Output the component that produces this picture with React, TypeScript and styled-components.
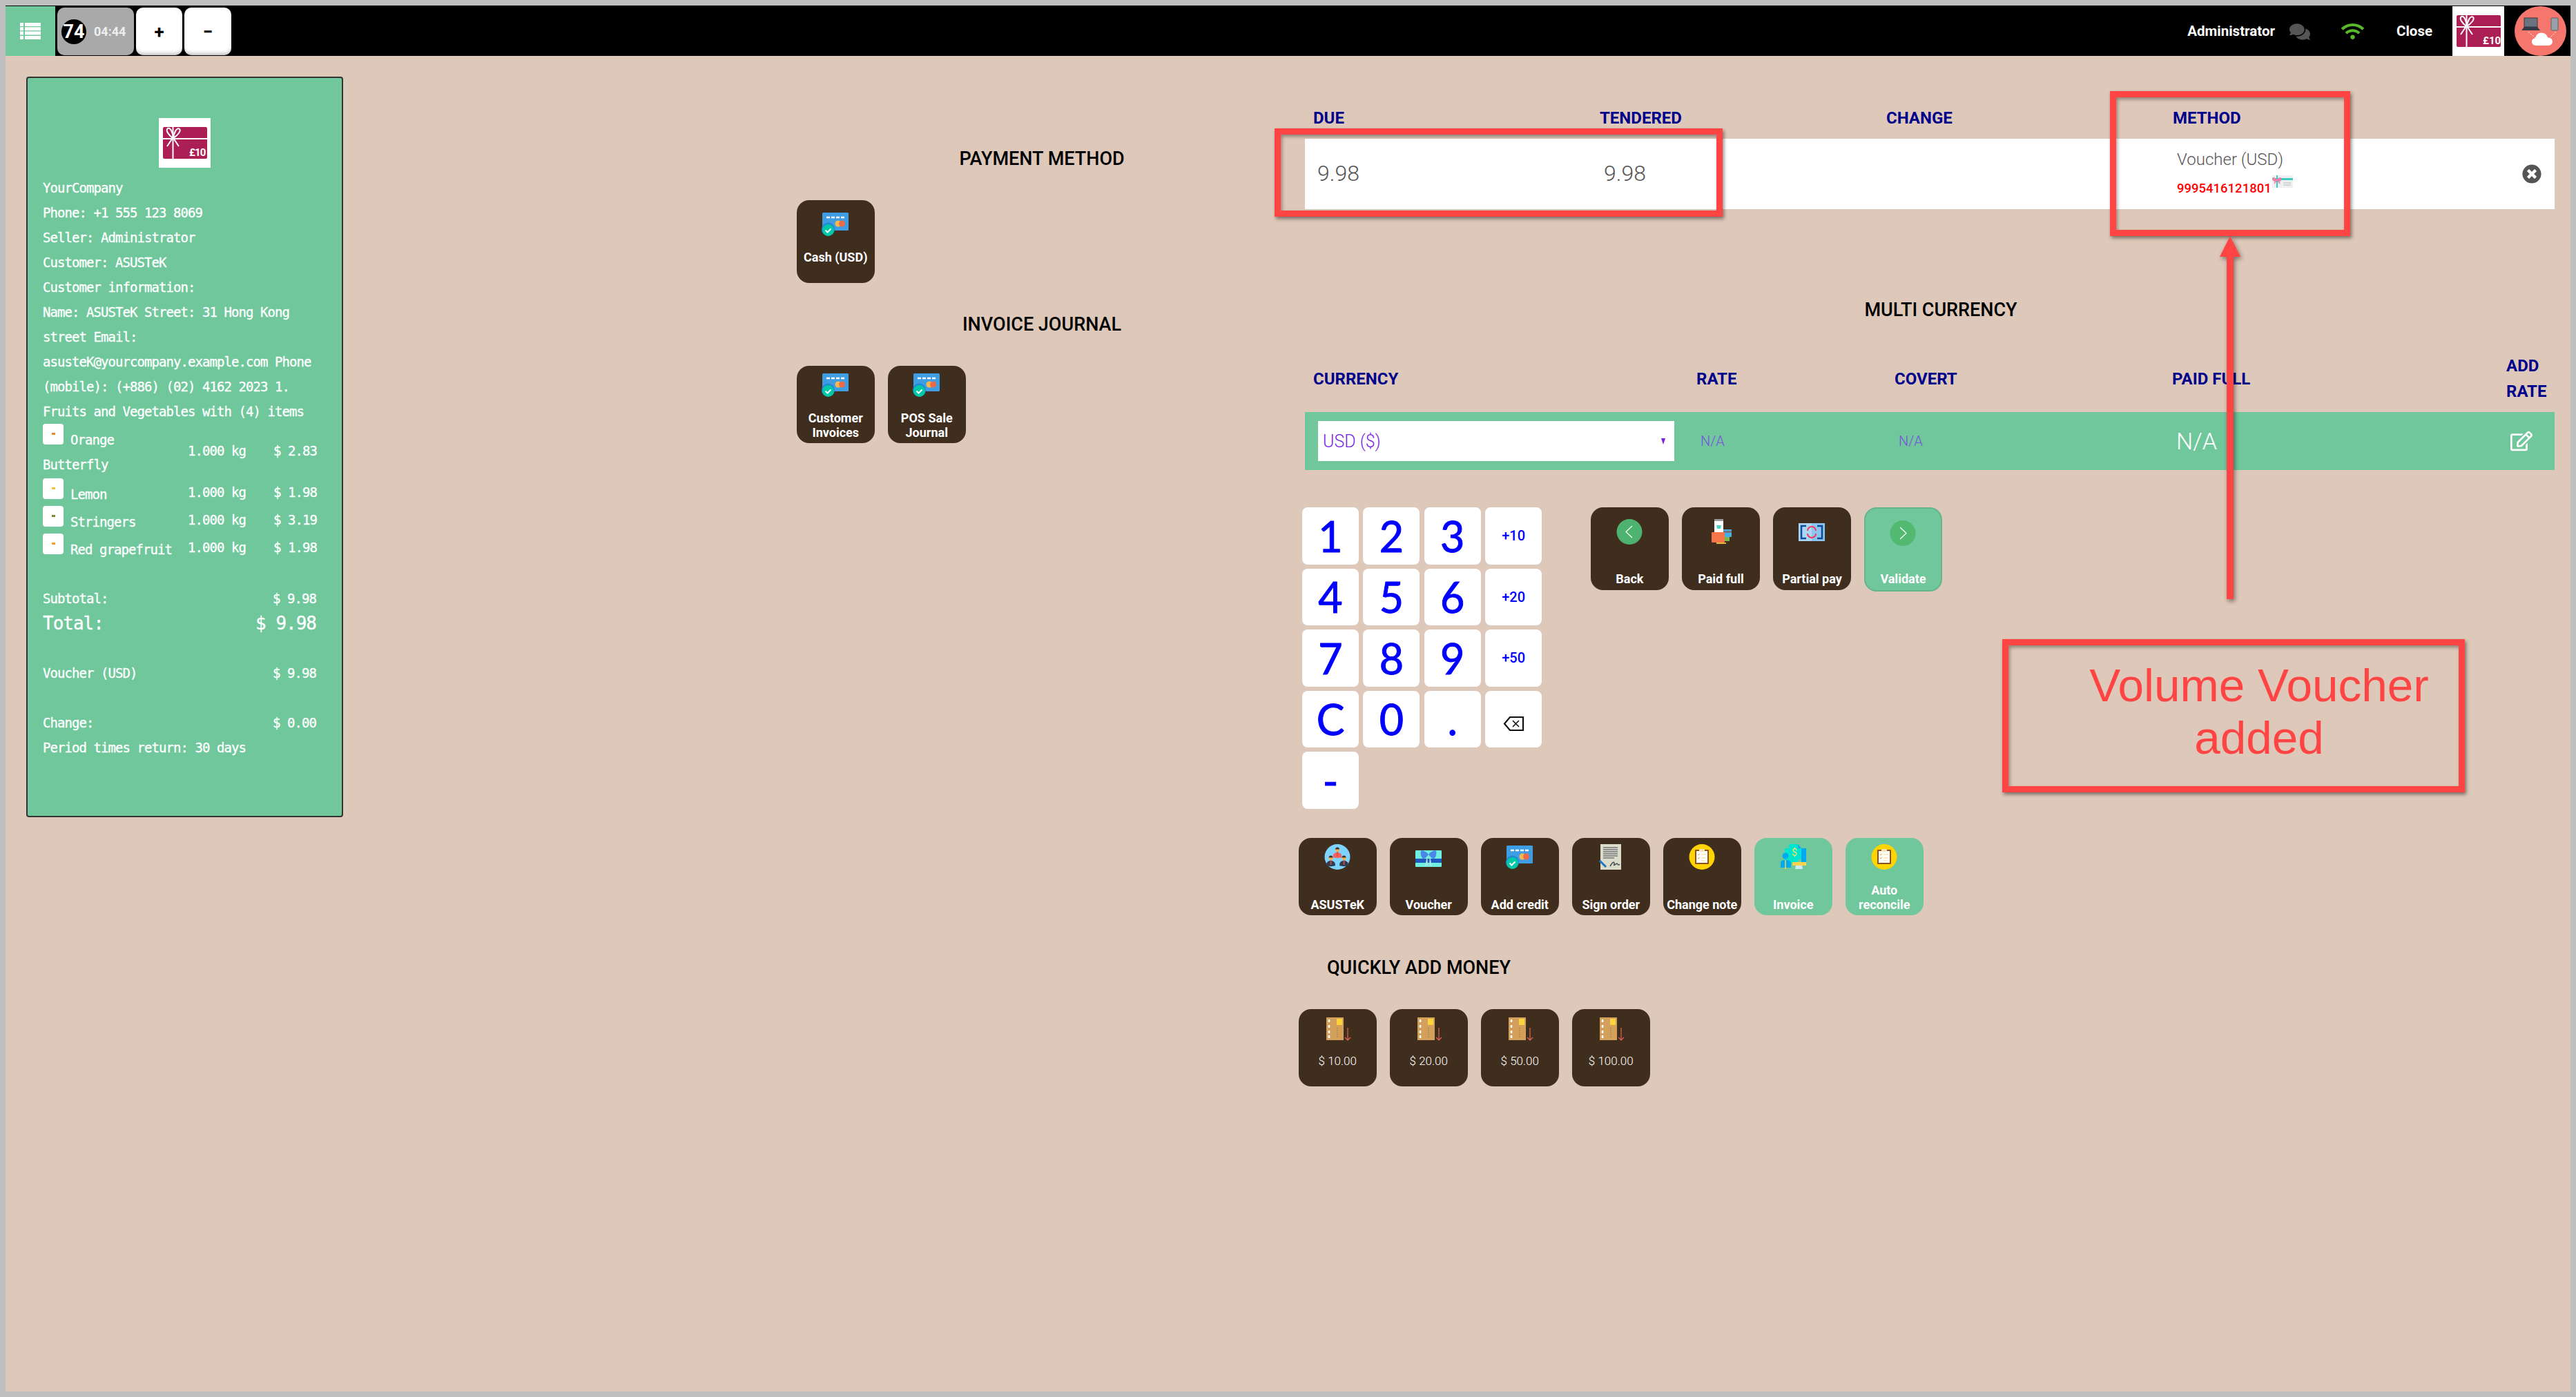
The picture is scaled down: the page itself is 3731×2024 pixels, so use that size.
import React from 'react';
import styled, { createGlobalStyle } from 'styled-components';
import { FaComments, FaRegEdit, FaTimesCircle, FaWifi } from 'react-icons/fa';

const GREEN = '#6fc79b';
const BROWN = '#3f2d1e';
const RED = '#ff4444';
const NAVY = '#00008b';

const GlobalStyle = createGlobalStyle`
  html, body {
    margin: 0;
    background: #c0c0c0;
  }
  * {
    box-sizing: border-box;
  }
`;

const Frame = styled.div`
  position: relative;
  margin: 8px;
  min-height: 2008px;
  background: #dec8b9;
  font-family: Roboto, sans-serif;
  overflow: hidden;
`;

/* top bar */
const TopBar = styled.header`
  display: flex;
  align-items: stretch;
  height: 73px;
  padding-top: 1px;
  background: #000;
`;

const MenuButton = styled.div`
  display: flex;
  align-items: center;
  justify-content: center;
  width: 72px;
  background: ${GREEN};
`;

const MenuIcon = styled.svg`
  display: block;
  width: 30px;
  height: 24px;
`;

const BarGroup = styled.div`
  display: flex;
  gap: 3px;
  margin-left: 3px;
  padding: 2px 0 1px;
`;

const OrderPill = styled.div`
  display: flex;
  align-items: center;
  gap: 11px;
  width: 111px;
  padding-left: 6px;
  border-radius: 10px;
  background: #a9a9a9;
`;

const OrderNumber = styled.span`
  display: flex;
  align-items: center;
  justify-content: center;
  width: 36px;
  height: 36px;
  border-radius: 50%;
  background: #000;
  color: #fff;
  font-size: 27px;
  font-weight: 700;
`;

const OrderTime = styled.span`
  color: #eee;
  font-size: 18px;
  font-weight: 700;
`;

const QtyButton = styled.div<{ $w: number }>`
  display: flex;
  align-items: center;
  justify-content: center;
  width: ${(p) => p.$w}px;
  border-radius: 10px;
  background: #fff;
  box-shadow: inset 0 -6px 6px -4px rgba(0, 0, 0, 0.3);
  color: #000;
  font-size: 26px;
  font-weight: 700;
`;

const BarRight = styled.div`
  display: flex;
  align-items: center;
  margin-left: auto;
  padding-right: 6px;
  color: #fff;
  font-size: 20.5px;
  font-weight: 700;
`;

const ChatIcon = styled(FaComments)`
  margin: 2px 45px 0 21px;
  color: #555;
  font-size: 30px;
`;

const WifiIcon = styled(FaWifi)`
  margin-right: 47px;
  color: #5ab82b;
  font-size: 33px;
`;

const CloseLabel = styled.span`
  margin-right: 29px;
`;

const BarLogo = styled.svg`
  display: block;
  width: 75px;
  height: 72px;
  margin-right: 15px;
`;

const Avatar = styled.svg`
  display: block;
  width: 75px;
  height: 72px;
`;

/* page columns */
const Main = styled.main`
  display: flex;
  align-items: flex-start;
  padding-left: 30px;
`;

/* receipt */
const Receipt = styled.section`
  flex: none;
  width: 459px;
  height: 1073px;
  margin-top: 30px;
  padding: 58px 37px 0 22px;
  border: 2px solid #333;
  border-radius: 4px;
  background: ${GREEN};
  color: #fff;
  font-family: 'DejaVu Sans Mono', monospace;
  font-size: 19px;
  letter-spacing: -0.94px;
  line-height: 36px;
  -webkit-text-stroke: 0.3px #fff;
`;

const ReceiptLogo = styled.svg`
  display: block;
  width: 75px;
  height: 72px;
  margin: 0 0 11px 168px;
`;

const ItemGrid = styled.div`
  display: grid;
  grid-template-columns: 210px 124px 62px;
  align-items: center;
`;

const ItemName = styled.div`
  padding-right: 15px;
  line-height: 34px;
`;

const Wrapped = styled.span`
  display: block;
  line-height: 38.5px;
`;

const Thumb = styled.span<{ $fruit: string }>`
  position: relative;
  display: inline-block;
  width: 30px;
  height: 30px;
  margin-right: 10px;
  border-radius: 4px;
  background: #fff;
  &::after {
    content: '';
    position: absolute;
    left: 13px;
    top: 13px;
    width: 5px;
    height: 3px;
    background: ${(p) => p.$fruit};
  }
`;

const Price = styled.div`
  text-align: right;
  white-space: nowrap;
`;

const SummaryRow = styled.div<{ $big?: boolean; $gap?: number }>`
  display: flex;
  justify-content: space-between;
  margin-top: ${(p) => p.$gap ?? 0}px;
  font-size: ${(p) => (p.$big ? 26 : 19)}px;
  letter-spacing: ${(p) => (p.$big ? -1 : -0.94)}px;
`;

/* tiles */
const TileRow = styled.div`
  display: flex;
  align-items: flex-start;
  gap: 19.5px;
`;

const Tile = styled.div<{ $h?: number; $pt?: number; $pb?: number; $active?: boolean; $outlined?: boolean }>`
  display: flex;
  flex-direction: column;
  align-items: center;
  justify-content: space-between;
  width: 112.5px;
  height: ${(p) => p.$h ?? 112}px;
  padding-top: ${(p) => p.$pt ?? 9}px;
  padding-bottom: ${(p) => p.$pb ?? 5}px;
  border-radius: 18px;
  background: ${(p) => (p.$active ? GREEN : BROWN)};
  border: ${(p) => (p.$outlined ? '2px solid #66b58d' : 'none')};
  color: #fff;
`;

const TileIcon = styled.svg`
  display: block;
  width: 40px;
  height: 37px;
  flex: none;
`;

const TileLabel = styled.div<{ $light?: boolean }>`
  font-size: ${(p) => (p.$light ? 17 : 18)}px;
  font-weight: ${(p) => (p.$light ? 300 : 700)};
  line-height: 20.5px;
  text-align: center;
  white-space: nowrap;
`;

const Heading = styled.h2<{ $align?: string; $pl?: number; $mt: number; $mb: number }>`
  margin: ${(p) => p.$mt}px 0 ${(p) => p.$mb}px;
  padding-left: ${(p) => p.$pl ?? 0}px;
  color: #000;
  font-size: 27px;
  font-weight: 500;
  line-height: 30px;
  text-align: ${(p) => p.$align ?? 'center'};
`;

const MiddleColumn = styled.section`
  flex: none;
  width: 710px;
  margin-left: 657px;
`;

/* payment table */
const RightColumn = styled.section`
  flex: none;
  width: 1819px;
  margin-left: 17px;
  padding-top: 75px;
`;

const PaymentTable = styled.div`
  margin-left: 9px;
`;

const PaymentHead = styled.div`
  display: grid;
  grid-template-columns: repeat(4, 415px) 1fr;
  height: 45px;
  padding-bottom: 15px;
`;

const ColumnTitle = styled.div`
  padding-left: 12px;
  color: ${NAVY};
  font-size: 24px;
  font-weight: 700;
  line-height: 30px;
`;

const PaymentRow = styled.div`
  display: grid;
  grid-template-columns: repeat(4, 415px) 1fr;
  align-items: center;
  height: 102px;
  background: #fff;
  color: #555;
`;

const Amount = styled.div`
  padding: 0 0 3px 18px;
  font-size: 32px;
  font-weight: 300;
`;

const MethodCell = styled.div`
  padding-left: 18px;
`;

const MethodName = styled.div`
  font-size: 24px;
  font-weight: 300;
  line-height: 30px;
`;

const VoucherCode = styled.div`
  display: flex;
  align-items: flex-start;
  gap: 1px;
  margin-top: 12px;
  color: #f00;
  font-size: 18.5px;
  font-weight: 500;
  line-height: 30px;
`;

const VoucherIcon = styled.svg`
  display: block;
  width: 30px;
  height: 18px;
  margin-top: -4px;
`;

const RemoveCell = styled.div`
  display: flex;
  justify-content: flex-end;
  padding-right: 19px;
  color: #555;
  font-size: 28px;
`;

/* currency table */
const CurrencyHead = styled.div`
  display: grid;
  grid-template-columns: 555px 287px 402px 484px 1fr;
  align-items: center;
  height: 75px;
  margin: 47px 0 11px;
`;

const AddRateTitle = styled(ColumnTitle)`
  line-height: 37px;
`;

const CurrencyRow = styled.div`
  display: grid;
  grid-template-columns: 555px 287px 402px 484px 1fr;
  align-items: center;
  height: 84px;
  background: ${GREEN};
`;

const SelectBox = styled.div`
  display: flex;
  align-items: center;
  justify-content: space-between;
  width: 516px;
  height: 58px;
  margin-left: 19px;
  padding: 0 13px 0 7px;
  background: #fff;
  color: #7b1fe6;
  font-size: 25px;
  font-weight: 300;
`;

const Caret = styled.span`
  border-top: 9px solid #7b1fe6;
  border-left: 3px solid transparent;
  border-right: 3px solid transparent;
`;

const NotAvailable = styled.div<{ $big?: boolean }>`
  padding-left: 18px;
  color: ${(p) => (p.$big ? '#fff' : '#7b4fe0')};
  font-size: ${(p) => (p.$big ? 34 : 20)}px;
  font-weight: 300;
`;

const EditCell = styled.div`
  padding-left: 18px;
  color: #fff;
  font-size: 32px;
  line-height: 0;
`;

/* keypad and action buttons */
const KeypadArea = styled.div`
  display: flex;
  align-items: flex-start;
  margin: 54px 0 42.5px 5px;
`;

const Keypad = styled.div`
  display: grid;
  grid-template-columns: repeat(4, 82px);
  grid-auto-rows: 82.5px;
  gap: 6px 6.4px;
  margin-right: 71px;
`;

const Key = styled.div<{ $small?: boolean }>`
  display: flex;
  align-items: center;
  justify-content: center;
  border-radius: 8px;
  background: #fff;
  color: #00f;
  font-family: ${(p) => (p.$small ? 'Roboto' : 'Lato')}, sans-serif;
  font-size: ${(p) => (p.$small ? 20 : 61)}px;
  font-weight: ${(p) => (p.$small ? 500 : 400)};
  -webkit-text-stroke: ${(p) => (p.$small ? 0 : 1)}px #00f;
`;

const BackspaceIcon = styled.svg`
  display: block;
  width: 31px;
  height: 23px;
  margin-top: 14px;
`;

/* annotations drawn over the screenshot */
const Callout = styled.div<{ $x: number; $y: number; $w: number; $h: number }>`
  position: absolute;
  left: ${(p) => p.$x - 8}px;
  top: ${(p) => p.$y - 8}px;
  width: ${(p) => p.$w}px;
  height: ${(p) => p.$h}px;
  border: 9.5px solid ${RED};
  box-shadow: 2px 3px 5px rgba(0, 0, 0, 0.45), inset 2px 3px 5px rgba(0, 0, 0, 0.35);
`;

const CalloutText = styled(Callout)`
  display: flex;
  align-items: center;
  justify-content: center;
  padding: 0 0 12px 74px;
  color: ${RED};
  font-family: 'Liberation Sans', Arial, sans-serif;
  font-size: 67.5px;
  line-height: 76px;
  text-align: center;
`;

const Arrow = styled.svg`
  position: absolute;
  left: ${3210 - 8}px;
  top: ${342 - 8}px;
  width: 44px;
  height: 534px;
  overflow: visible;
  filter: drop-shadow(2px 3px 3px rgba(0, 0, 0, 0.45));
`;

/* drawings */
const GiftArt = () => (
  <>
    <rect width="75" height="72" fill="#fff" />
    <rect x="6" y="13" width="64" height="46" rx="2" fill="#ab1f55" />
    <path d="M20.5 13v46M6 30h64" stroke="#fff" strokeWidth="2" />
    <path
      d="M20 29c-5-4-11-11-7-14 4-2 7 6 8 14 1-8 5-16 9-13 3 3-4 10-9 13M20 29l-8 12M21 29l8 12"
      fill="none"
      stroke="#fff"
      strokeWidth="2"
    />
    <text x="44" y="55" fill="#fff" fontFamily="Roboto" fontSize="15" fontWeight="700">
      £10
    </text>
  </>
);

const CloudAvatar = () => (
  <Avatar viewBox="0 0 75 72">
    <ellipse cx="37.5" cy="36" rx="37.5" ry="36" fill="#f4766d" />
    <rect x="14" y="17" width="19" height="13" fill="#6b7280" stroke="#333a44" />
    <path d="M10 35l4-5h19l4 5z" fill="#333a44" />
    <rect x="53" y="17" width="10" height="18" rx="1" fill="#9aa0a8" stroke="#5b6470" />
    <path d="M20 37l10 9M60 37l-10 10" stroke="#fff" strokeDasharray="2 2" />
    <path d="M31 57c-4 0-6-3-6-5.5 0-3 2-5 5-5 1-5 4-8 9-8 5 0 8 3 9 7 4 0 7 2 7 6 0 3-3 5.5-6 5.5z" fill="#fff" />
  </Avatar>
);

const CardCheck = () => (
  <TileIcon viewBox="0 0 40 37">
    <rect x="1" y="2" width="38" height="26" rx="1.5" fill="#3f9de4" />
    <path d="M7 9h5M14 9h5M21 9h5M28 9h5" stroke="#fff" strokeWidth="2.5" />
    <circle cx="24" cy="18" r="4.5" fill="#f7b84b" />
    <circle cx="29.5" cy="18" r="4.5" fill="#ea6a4a" />
    <circle cx="9.5" cy="26" r="9.5" fill="#2586d8" />
    <circle cx="9.5" cy="27.5" r="8.5" fill="#00c9a7" />
    <path d="M5.5 27.5l3 3 5-5" fill="none" stroke="#fff" strokeWidth="2" />
  </TileIcon>
);

const Person = ({ x, y, shirt }: { x: number; y: number; shirt: string }) => (
  <g>
    <path d={`M${x - 6.5} ${y + 13}c0-5 2.5-7 6.5-7s6.5 2 6.5 7c-3 1.5-10 1.5-13 0z`} fill={shirt} />
    <rect x={x - 0.7} y={y + 5} width="1.6" height="7" fill="#e74c3c" />
    <circle cx={x} cy={y + 2} r="3" fill="#f5b041" />
    <path d={`M${x - 3} ${y + 1.5}c0-4 6-4 6 0z`} fill="#333" />
  </g>
);

const GroupIcon = () => (
  <TileIcon viewBox="0 0 40 37">
    <circle cx="20" cy="18.5" r="18.5" fill="#7fd4ff" />
    <Person x={20} y={6} shirt="#f2635f" />
    <Person x={10.5} y={18} shirt="#2c3e50" />
    <Person x={29.5} y={18} shirt="#2c3e50" />
  </TileIcon>
);

const VoucherGift = () => (
  <TileIcon viewBox="0 0 40 37">
    <rect x="1" y="9" width="38" height="24" rx="1" fill="#6ff0e0" />
    <rect x="1" y="21" width="38" height="6" fill="#2059c0" />
    <path d="M20 15c-4-5-9-7-11-5-1 3 0 9 3 11 3 0 6-3 8-6 2 3 5 6 8 6 3-2 4-8 3-11-2-2-7 0-11 5z" fill="#4a86e8" />
    <path d="M18 16l-3 17 4-3zM22 16l3 17-4-3z" fill="#a8e6e8" />
  </TileIcon>
);

const SignedPaper = () => (
  <TileIcon viewBox="0 0 40 37">
    <rect x="5" y="0" width="30" height="37" fill="#dcdccb" />
    <path d="M9 5h21M9 8h21M9 11h21M9 14h21M9 17h21M9 20h16" stroke="#6f7478" strokeWidth="1.3" />
    <path d="M4 24l9 9" stroke="#1979c8" strokeWidth="3" />
    <path d="M19 32c3-5 5-7 6-5s-2 5 1 3 3-3 4-1 2 1 3 0" fill="none" stroke="#4a4f52" strokeWidth="1.5" />
  </TileIcon>
);

const ClipboardIcon = () => (
  <TileIcon viewBox="0 0 40 37">
    <circle cx="20" cy="18.5" r="18.5" fill="#ffd400" />
    <rect x="10" y="8" width="20" height="21" rx="1" fill="#8a5220" />
    <rect x="12" y="10" width="16" height="17" fill="#fff" />
    <rect x="16" y="7" width="8" height="4" rx="1" fill="#f6e3b4" />
    <path d="M14 15l1 1 2-2M14 20l1 1 2-2" fill="none" stroke="#f2a51a" />
    <path d="M19 15h7M19 20h7M19 24h5" stroke="#f5d98a" />
  </TileIcon>
);

const InvoiceIcon = () => (
  <TileIcon viewBox="0 0 40 37">
    <path d="M8 6h17l2 0v22H8z" fill="#00e5d0" />
    <path d="M14 0h13l5 6v16H14z" fill="#00e5d0" />
    <path d="M27 0l5 6h-5z" fill="#2b9fe6" />
    <rect x="32" y="6" width="7" height="20" fill="#00aaf0" />
    <text x="18" y="17" fill="#f6e05e" fontFamily="Roboto" fontSize="14">
      $
    </text>
    <rect x="19" y="26" width="20" height="5" fill="#fbd34d" />
    <path d="M24 31h9l1 5h-11z" fill="#cfe8f5" />
    <circle cx="9" cy="17" r="4.5" fill="#00aaf0" />
    <path d="M2 34v-6c0-4 2-5 7-5s8 1 8 5v6z" fill="#00aaf0" />
    <path d="M9 23v13" stroke="#fbd34d" strokeWidth="1.5" />
  </TileIcon>
);

const CircleArrow = ({ dir }: { dir: 'back' | 'next' }) => (
  <TileIcon viewBox="0 0 40 37">
    <circle cx="20" cy="18.5" r="18.5" fill={dir === 'back' ? '#4db36e' : '#52b970'} />
    <path
      d={dir === 'back' ? 'M24 10l-9 8.5 9 8.5' : 'M16 10l9 8.5-9 8.5'}
      fill="none"
      stroke="#fff"
      strokeWidth="1.2"
    />
  </TileIcon>
);

const PhoneWallet = () => (
  <TileIcon viewBox="0 0 40 37">
    <rect x="22" y="15" width="14" height="11" fill="#4aaee6" />
    <rect x="22" y="17" width="14" height="3" fill="#6b7780" />
    <rect x="26" y="26" width="7" height="6" fill="#7ab648" />
    <rect x="11" y="0" width="13" height="22" rx="1" fill="#fff" />
    <rect x="11" y="0" width="13" height="3" fill="#9a9a9a" />
    <path d="M14 9h7l-1 5h-5z" fill="#4fd2c2" />
    <rect x="7" y="19" width="19" height="15" rx="1" fill="#f7734a" />
    <path d="M14 34h14v2H14z" fill="#e2b93b" />
  </TileIcon>
);

const PartialIcon = () => (
  <TileIcon viewBox="0 0 40 37">
    <rect x="1" y="6" width="38" height="26" fill="#a9d6f5" />
    <rect x="20" y="6" width="19" height="26" fill="#8cc6ee" />
    <path d="M12 10H5v18h7M28 10h7v18h-7" fill="none" stroke="#0d4a9a" strokeWidth="2.5" />
    <path d="M14 17a6 6 0 0 1 12 0M26 21a6 6 0 0 1-12 0" fill="none" stroke="#f0385a" strokeWidth="2" />
  </TileIcon>
);

const MoneyCard = () => (
  <TileIcon viewBox="0 0 40 37">
    <rect x="4" y="1" width="25" height="33" fill="#d2a05a" />
    <path d="M8 4v4M8 12v4M8 20v4M8 27v4" stroke="#fff" strokeWidth="2.5" />
    <rect x="19" y="3" width="8" height="9" fill="#ffd23f" />
    <path d="M20 16v14" stroke="#9b7238" strokeDasharray="1.5 1.5" />
    <path d="M35 16v18M31 30l4 4 4-4" fill="none" stroke="#d9604f" strokeWidth="1.3" />
  </TileIcon>
);

const App = () => {
  const keys = ['1', '2', '3', '+10', '4', '5', '6', '+20', '7', '8', '9', '+50', 'C', '0', '.', 'back', '-'];
  const items = [
    { name: 'Orange', wrap: 'Butterfly', qty: '1.000 kg', price: '$ 2.83', fruit: '#e08a2e' },
    { name: 'Lemon', qty: '1.000 kg', price: '$ 1.98', fruit: '#f0c23c' },
    { name: 'Stringers', qty: '1.000 kg', price: '$ 3.19', fruit: '#7a8a32' },
    { name: 'Red grapefruit', qty: '1.000 kg', price: '$ 1.98', fruit: '#f0a030' },
  ];
  const moneyLabels = ['$ 10.00', '$ 20.00', '$ 50.00', '$ 100.00'];

  return (
    <Frame>
      <GlobalStyle />
      <TopBar>
        <MenuButton>
          <MenuIcon viewBox="0 0 30 24" fill="#fff">
            <path d="M0 0h5v5H0zM7 0h23v5H7zM0 6.3h5v5H0zM7 6.3h23v5H7zM0 12.6h5v5H0zM7 12.6h23v5H7zM0 19h5v5H0zM7 19h23v5H7z" />
          </MenuIcon>
        </MenuButton>
        <BarGroup>
          <OrderPill>
            <OrderNumber>74</OrderNumber>
            <OrderTime>04:44</OrderTime>
          </OrderPill>
          <QtyButton $w={67}>+</QtyButton>
          <QtyButton $w={68}>−</QtyButton>
        </BarGroup>
        <BarRight>
          <span>Administrator</span>
          <ChatIcon />
          <WifiIcon />
          <CloseLabel>Close</CloseLabel>
          <BarLogo viewBox="0 0 75 72">
            <GiftArt />
          </BarLogo>
          <CloudAvatar />
        </BarRight>
      </TopBar>

      <Main>
        <Receipt>
          <ReceiptLogo viewBox="0 0 75 72">
            <GiftArt />
          </ReceiptLogo>
          <div>YourCompany</div>
          <div>Phone: +1 555 123 8069</div>
          <div>Seller: Administrator</div>
          <div>Customer: ASUSTeK</div>
          <div>Customer information:</div>
          <div>
            Name: ASUSTeK Street: 31 Hong Kong street Email: asusteK@yourcompany.example.com Phone (mobile): (+886) (02)
            4162 2023 1. Fruits and Vegetables with (4) items
          </div>
          <ItemGrid>
            {items.map((item) => (
              <React.Fragment key={item.name}>
                <ItemName>
                  <Thumb $fruit={item.fruit} />
                  {item.name}
                  {item.wrap && <Wrapped>{item.wrap}</Wrapped>}
                </ItemName>
                <div>{item.qty}</div>
                <Price>{item.price}</Price>
              </React.Fragment>
            ))}
          </ItemGrid>
          <SummaryRow $gap={36}>
            <span>Subtotal:</span>
            <span>$ 9.98</span>
          </SummaryRow>
          <SummaryRow $big>
            <span>Total:</span>
            <span>$ 9.98</span>
          </SummaryRow>
          <SummaryRow $gap={36}>
            <span>Voucher (USD)</span>
            <span>$ 9.98</span>
          </SummaryRow>
          <SummaryRow $gap={36}>
            <span>Change:</span>
            <span>$ 0.00</span>
          </SummaryRow>
          <div>Period times return: 30 days</div>
        </Receipt>

        <MiddleColumn>
          <Heading $mt={134} $mb={45}>
            PAYMENT METHOD
          </Heading>
          <TileRow>
            <Tile $h={120} $pt={16} $pb={27}>
              <CardCheck />
              <TileLabel>Cash (USD)</TileLabel>
            </Tile>
          </TileRow>
          <Heading $mt={45} $mb={45}>
            INVOICE JOURNAL
          </Heading>
          <TileRow>
            <Tile $pt={9} $pb={5}>
              <CardCheck />
              <TileLabel>
                Customer
                <br />
                Invoices
              </TileLabel>
            </Tile>
            <Tile $pt={9} $pb={5}>
              <CardCheck />
              <TileLabel>
                POS Sale
                <br />
                Journal
              </TileLabel>
            </Tile>
          </TileRow>
        </MiddleColumn>

        <RightColumn>
          <PaymentTable>
            <PaymentHead>
              <ColumnTitle>DUE</ColumnTitle>
              <ColumnTitle>TENDERED</ColumnTitle>
              <ColumnTitle>CHANGE</ColumnTitle>
              <ColumnTitle>METHOD</ColumnTitle>
            </PaymentHead>
            <PaymentRow>
              <Amount>9.98</Amount>
              <Amount>9.98</Amount>
              <div />
              <MethodCell>
                <MethodName>Voucher (USD)</MethodName>
                <VoucherCode>
                  9995416121801
                  <VoucherIcon viewBox="0 0 30 18">
                    <rect width="30" height="18" fill="#eef0f2" />
                    <rect y="4" width="30" height="3" fill="#3cc9c0" />
                    <rect x="6" width="2" height="18" fill="#3cc9c0" />
                    <path d="M7 6C1 0-1 4 1 7s4 3 6-1c2 4 5 4 6 1S12 0 7 6z" fill="#ee7fa8" />
                    <path d="M7 6l-4 6M7 6l4 6" stroke="#ee7fa8" strokeWidth="1.5" />
                    <path d="M16 11h11M16 14h11" stroke="#c8ccd0" strokeWidth="1.5" />
                  </VoucherIcon>
                </VoucherCode>
              </MethodCell>
              <RemoveCell>
                <FaTimesCircle />
              </RemoveCell>
            </PaymentRow>
          </PaymentTable>

          <Heading $mt={131} $mb={0} $pl={41}>
            MULTI CURRENCY
          </Heading>

          <PaymentTable>
            <CurrencyHead>
              <ColumnTitle>CURRENCY</ColumnTitle>
              <ColumnTitle>RATE</ColumnTitle>
              <ColumnTitle>COVERT</ColumnTitle>
              <ColumnTitle>PAID FULL</ColumnTitle>
              <AddRateTitle>
                ADD
                <br />
                RATE
              </AddRateTitle>
            </CurrencyHead>
            <CurrencyRow>
              <SelectBox>
                <span>USD ($)</span>
                <Caret />
              </SelectBox>
              <NotAvailable>N/A</NotAvailable>
              <NotAvailable>N/A</NotAvailable>
              <NotAvailable $big>N/A</NotAvailable>
              <EditCell>
                <FaRegEdit />
              </EditCell>
            </CurrencyRow>
          </PaymentTable>

          <KeypadArea>
            <Keypad>
              {keys.map((k) => (
                <Key key={k} $small={k.startsWith('+')}>
                  {k === 'back' ? (
                    <BackspaceIcon viewBox="0 0 31 23">
                      <path d="M10 2h19v19H10L2 11.5z" fill="none" stroke="#111" strokeWidth="2.2" />
                      <path d="M14 7l9 9M23 7l-9 9" stroke="#111" strokeWidth="1.6" />
                    </BackspaceIcon>
                  ) : (
                    k
                  )}
                </Key>
              ))}
            </Keypad>
            <TileRow>
              <Tile $h={120} $pt={17} $pb={6}>
                <CircleArrow dir="back" />
                <TileLabel>Back</TileLabel>
              </Tile>
              <Tile $h={120} $pt={17} $pb={6}>
                <PhoneWallet />
                <TileLabel>Paid full</TileLabel>
              </Tile>
              <Tile $h={120} $pt={17} $pb={6}>
                <PartialIcon />
                <TileLabel>Partial pay</TileLabel>
              </Tile>
              <Tile $h={122} $pt={17} $pb={6} $active $outlined>
                <CircleArrow dir="next" />
                <TileLabel>Validate</TileLabel>
              </Tile>
            </TileRow>
          </KeypadArea>

          <TileRow>
            <Tile>
              <GroupIcon />
              <TileLabel>ASUSTeK</TileLabel>
            </Tile>
            <Tile>
              <VoucherGift />
              <TileLabel>Voucher</TileLabel>
            </Tile>
            <Tile>
              <CardCheck />
              <TileLabel>Add credit</TileLabel>
            </Tile>
            <Tile>
              <SignedPaper />
              <TileLabel>Sign order</TileLabel>
            </Tile>
            <Tile>
              <ClipboardIcon />
              <TileLabel>Change note</TileLabel>
            </Tile>
            <Tile $active>
              <InvoiceIcon />
              <TileLabel>Invoice</TileLabel>
            </Tile>
            <Tile $active>
              <ClipboardIcon />
              <TileLabel>
                Auto
                <br />
                reconcile
              </TileLabel>
            </Tile>
          </TileRow>

          <Heading $mt={61} $mb={45} $pl={41} $align="left">
            QUICKLY ADD MONEY
          </Heading>

          <TileRow>
            {moneyLabels.map((label) => (
              <Tile key={label} $pt={11} $pb={27}>
                <MoneyCard />
                <TileLabel $light>{label}</TileLabel>
              </Tile>
            ))}
          </TileRow>
        </RightColumn>
      </Main>

      <Callout $x={1846} $y={186} $w={649} $h={128} />
      <Callout $x={3056} $y={132} $w={348} $h={210} />
      <Arrow viewBox="0 0 44 534">
        <path d="M20 0l15 30H25v496h-10V30H5z" fill={RED} strokeLinejoin="round" />
      </Arrow>
      <CalloutText $x={2900} $y={926} $w={670} $h={222}>
        Volume Voucher
        <br />
        added
      </CalloutText>
    </Frame>
  );
};

export default App;
